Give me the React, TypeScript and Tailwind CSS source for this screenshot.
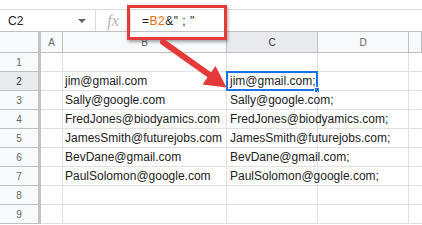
import React from 'react';

const colHeads = ['', 'A', 'B', 'C', 'D', ''];

const rows: [string, string][] = [
    ['', ''],
    ['jim@gmail.com', 'jim@gmail.com;'],
    ['Sally@google.com', 'Sally@google.com;'],
    ['FredJones@biodyamics.com', 'FredJones@biodyamics.com;'],
    ['JamesSmith@futurejobs.com', 'JamesSmith@futurejobs.com;'],
    ['BevDane@gmail.com', 'BevDane@gmail.com;'],
    ['PaulSolomon@google.com', 'PaulSolomon@google.com;'],
    ['', ''],
    ['', ''],
];

const gridCols = 'grid grid-cols-[41px_22px_164px_91px_91px_1fr]';

const App = () => {
    return (
        <div className="relative w-[422px] h-[225px] overflow-hidden bg-white font-['Liberation_Sans',Arial,sans-serif] text-[#222]">
            {/* formula bar */}
            <div className="mt-[9px] h-[22px] flex items-center border-t border-[#dadce0]">
                <div className="w-[96px] h-full flex items-center justify-between pl-[8px] pr-[9px] border-r border-[#dadce0]">
                    <span className="text-[12px]">C2</span>
                    <span className="w-0 h-0 border-l-[4px] border-r-[4px] border-t-[4px] border-l-transparent border-r-transparent border-t-[#666]" />
                </div>
                <div className="w-[35px] h-full flex items-center justify-center border-r border-[#dadce0]">
                    <span className="font-['Liberation_Serif',serif] italic text-[16px] text-[#b5b5b5]">fx</span>
                </div>
                <div className="pl-[11px] text-[12px] tracking-[0.5px]">
                    =<span className="text-[#e8710a]">B2</span>&amp;" ; "
                </div>
            </div>

            {/* column headers */}
            <div className={`${gridCols} h-[22px] border-t border-[#c0c0c0] bg-[#f8f9fa]`}>
                {colHeads.map((h, i) => (
                    <div
                        key={i}
                        className={`flex items-center justify-center text-[10px] border-b border-[#c0c0c0] ${
                            i === 0 ? 'border-r-[3px] border-r-[#c4c4c4]' : 'border-r border-[#c0c0c0]'
                        } ${h === 'C' ? 'bg-[#e8eaed] text-[#333]' : 'text-[#666]'}`}
                    >
                        {h}
                    </div>
                ))}
            </div>

            {/* rows */}
            {rows.map(([b, c], r) => (
                <div key={r} className={`${gridCols} h-[19px]`}>
                    <div
                        className={`flex items-center justify-center text-[10px] border-b border-[#c0c0c0] border-r-[3px] border-r-[#c4c4c4] ${
                            r === 1 ? 'bg-[#e8eaed] text-[#333]' : 'bg-[#f8f9fa] text-[#666]'
                        }`}
                    >
                        {r + 1}
                    </div>
                    <div className="border-b border-r border-[#e2e2e2]" />
                    <div className="border-b border-r border-[#e2e2e2] flex items-center pl-[2px] text-[12px] whitespace-nowrap">
                        {b}
                    </div>
                    <div className="relative border-b border-r border-[#e2e2e2] flex items-center pl-[3px] text-[12px] whitespace-nowrap z-10">
                        {c}
                        {r === 1 && (
                            <>
                                <div className="absolute left-[-1px] top-[-1px] right-[-1px] bottom-[-1px] border-2 border-[#1a73e8]" />
                                <div className="absolute right-[-3px] bottom-[-3px] w-[6px] h-[6px] bg-[#1a73e8] border border-white" />
                            </>
                        )}
                    </div>
                    <div className="border-b border-r border-[#e2e2e2]" />
                    <div className="border-b border-[#e2e2e2]" />
                </div>
            ))}

            {/* callout box */}
            <div className="absolute left-[127px] top-[5px] w-[100px] h-[35px] border-[3px] border-[#e53a3a] shadow-[1px_2px_3px_rgba(0,0,0,0.35)] z-20" />

            {/* callout arrow */}
            <svg className="absolute inset-0 z-20 pointer-events-none" width="422" height="225" viewBox="0 0 422 225">
                <line x1="163" y1="42" x2="211" y2="76" stroke="#e53a3a" strokeWidth="6" strokeLinecap="round" />
                <polygon points="226.5,87.5 202.5,84.5 215.5,66" fill="#e53a3a" />
            </svg>
        </div>
    );
};

export default App;
